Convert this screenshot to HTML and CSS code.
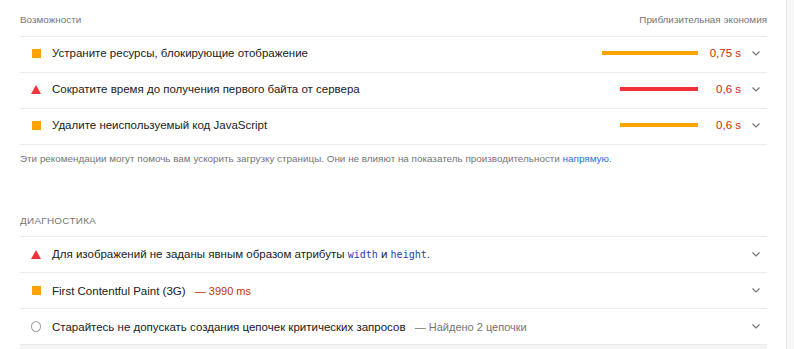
FILE: index.html
```html
<!DOCTYPE html>
<html lang="ru">
<head>
  <meta charset="UTF-8">
  <title>Lighthouse - Производительность</title>
  <link rel="stylesheet" href="styles.css">
</head>
<body>
<div class="report">

  <!-- Возможности -->
  <section class="group">
    <div class="group-header">
      <span>Возможности</span>
      <span>Приблизительная экономия</span>
    </div>

    <div class="audit opportunity">
      <span class="icon icon-average"></span>
      <span class="audit-title">Устраните ресурсы, блокирующие отображение</span>
      <div class="bar-wrap"><div class="bar bar-average" style="width: 96px"></div></div>
      <span class="value value-average">0,75&nbsp;s</span>
      <svg class="chevron" width="8" height="5" viewBox="0 0 8 5"><path d="M0.5 0.5 L4 4 L7.5 0.5" fill="none" stroke="#757575" stroke-width="1.2"/></svg>
    </div>

    <div class="audit opportunity">
      <span class="icon icon-fail"></span>
      <span class="audit-title">Сократите время до получения первого байта от сервера</span>
      <div class="bar-wrap"><div class="bar bar-fail" style="width: 78px"></div></div>
      <span class="value value-fail">0,6&nbsp;s</span>
      <svg class="chevron" width="8" height="5" viewBox="0 0 8 5"><path d="M0.5 0.5 L4 4 L7.5 0.5" fill="none" stroke="#757575" stroke-width="1.2"/></svg>
    </div>

    <div class="audit opportunity">
      <span class="icon icon-average"></span>
      <span class="audit-title">Удалите неиспользуемый код JavaScript</span>
      <div class="bar-wrap"><div class="bar bar-average" style="width: 78px"></div></div>
      <span class="value value-average">0,6&nbsp;s</span>
      <svg class="chevron" width="8" height="5" viewBox="0 0 8 5"><path d="M0.5 0.5 L4 4 L7.5 0.5" fill="none" stroke="#757575" stroke-width="1.2"/></svg>
    </div>

    <p class="group-description">Эти рекомендации могут помочь вам ускорить загрузку страницы. Они не влияют на показатель производительности <a href="#">напрямую</a>.</p>
  </section>

  <!-- Диагностика -->
  <section class="group diagnostics">
    <div class="group-header">
      <span class="caps">Диагностика</span>
    </div>

    <div class="audit">
      <span class="icon icon-fail"></span>
      <span class="audit-title">Для изображений не заданы явным образом атрибуты <code>width</code> и <code>height</code>.</span>
      <svg class="chevron" width="8" height="5" viewBox="0 0 8 5"><path d="M0.5 0.5 L4 4 L7.5 0.5" fill="none" stroke="#757575" stroke-width="1.2"/></svg>
    </div>

    <div class="audit">
      <span class="icon icon-average"></span>
      <span class="audit-title">First Contentful Paint (3G) <span class="display-text value-average">— 3990 ms</span></span>
      <svg class="chevron" width="8" height="5" viewBox="0 0 8 5"><path d="M0.5 0.5 L4 4 L7.5 0.5" fill="none" stroke="#757575" stroke-width="1.2"/></svg>
    </div>

    <div class="audit">
      <span class="icon icon-info"></span>
      <span class="audit-title">Старайтесь не допускать создания цепочек критических запросов <span class="display-text">— Найдено 2 цепочки</span></span>
      <svg class="chevron" width="8" height="5" viewBox="0 0 8 5"><path d="M0.5 0.5 L4 4 L7.5 0.5" fill="none" stroke="#757575" stroke-width="1.2"/></svg>
    </div>

    <div class="audit shaded"></div>
  </section>

</div>
</body>
</html>
```

FILE: styles.css
```css
/* Общие стили */
:root {
  --average: #ffa400;
  --average-text: #c33300;
  --fail: #f2333a;
  --fail-text: #c7221f;
  --gray: #757575;
  --line: #ebebeb;
  --text: #212121;
}

* {
  margin: 0;
  padding: 0;
  box-sizing: border-box;
}

body {
  background-color: #f7f7f7;
  color: var(--text);
  font-family: "Liberation Sans", Arial, sans-serif;
  font-size: 11.5px;
  line-height: 20px;
  overflow: hidden;
}

.report {
  width: 787px;
  min-height: 100vh;
  background-color: white;
  border-right: 1px solid #e3e3e3;
  padding: 0 19px 0 20px;
}

/* Заголовки групп */
.group-header {
  display: flex;
  justify-content: space-between;
  color: var(--gray);
  font-size: 9.9px;
  line-height: 16px;
  padding: 12px 0 8px;
  border-bottom: 1px solid var(--line);
}

.caps {
  text-transform: uppercase;
  letter-spacing: 0.3px;
}

.diagnostics {
  margin-top: 34px;
}

.diagnostics .group-header {
  padding: 12px 0 7px;
}

/* Строки аудитов */
.audit {
  display: flex;
  align-items: center;
  height: 36px;
  padding-left: 11px;
  border-bottom: 1px solid var(--line);
}

.opportunity {
  padding-bottom: 3px;
}

.shaded {
  background-color: #f5f5f5;
}

.audit-title {
  flex: 1;
  white-space: nowrap;
}

.icon {
  width: 10px;
  height: 10px;
  margin-right: 11px;
  flex-shrink: 0;
  display: flex;
  align-items: center;
  justify-content: center;
}

.icon-average::before {
  content: "";
  width: 9px;
  height: 9px;
  background-color: var(--average);
}

.icon-fail::before {
  content: "";
  border-left: 5px solid transparent;
  border-right: 5px solid transparent;
  border-bottom: 9px solid var(--fail);
}

.icon-info::before {
  content: "";
  width: 9px;
  height: 9px;
  border: 1.3px solid #9e9e9e;
  border-radius: 50%;
}

/* Полосы экономии */
.bar-wrap {
  width: 120px;
  display: flex;
  justify-content: flex-end;
}

.bar {
  height: 4px;
}

.bar-average {
  background-color: var(--average);
}

.bar-fail {
  background-color: var(--fail);
}

.value {
  width: 43px;
  text-align: right;
  font-size: 11.5px;
}

.value-average {
  color: var(--average-text);
}

.value-fail {
  color: var(--fail-text);
}

.chevron {
  margin: 0 7px 0 11px;
  flex-shrink: 0;
}

.display-text {
  color: var(--gray);
  font-size: 11px;
  margin-left: 6px;
}

.display-text.value-average {
  color: var(--average-text);
}

code {
  font-family: "DejaVu Sans Mono", monospace;
  font-size: 10px;
  color: #1f3fb0;
}

.group-description {
  color: var(--gray);
  font-size: 9.9px;
  line-height: 16px;
  padding-top: 6px;
}

.group-description a {
  color: #1a73e8;
  text-decoration: none;
}
```
